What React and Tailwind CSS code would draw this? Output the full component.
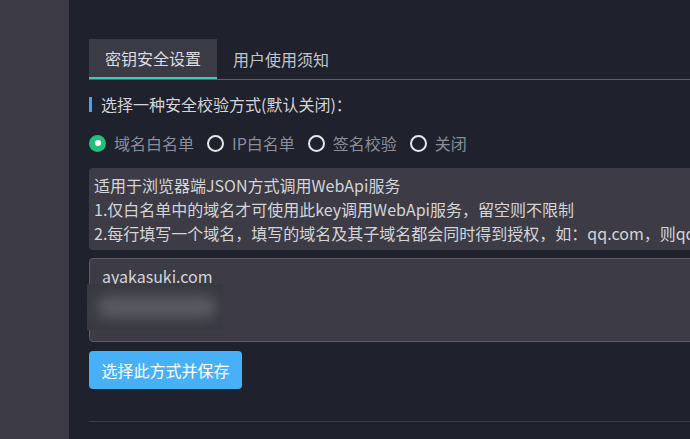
import React, { useState } from "react";

const options = ["域名白名单", "IP白名单", "签名校验", "关闭"];

const Radio = ({ label, checked, onClick }) => (
  <button
    type="button"
    onClick={onClick}
    className="flex items-center gap-[8px] mr-[13px] text-[16px] text-[#8b8e9a]"
  >
    {checked ? (
      <span className="w-[17px] h-[17px] rounded-full bg-[#22c17a] flex items-center justify-center">
        <span className="w-[6px] h-[6px] rounded-full bg-white" />
      </span>
    ) : (
      <span className="w-[17px] h-[17px] rounded-full border-[2.5px] border-[#e6e6ea]" />
    )}
    <span>{label}</span>
  </button>
);

const App = () => {
  const [tab, setTab] = useState(0);
  const [mode, setMode] = useState(0);

  return (
    <div
      className="flex w-[690px] h-[439px] overflow-hidden bg-[#1f212c]"
      style={{ fontFamily: '"Microsoft YaHei", "Noto Sans CJK SC", sans-serif' }}
    >
      <aside className="w-[69px] shrink-0 bg-[#3c3b45]" />
      <main className="flex-1 min-w-0 overflow-hidden pl-[20px] pt-[39px]">
        <div className="w-[700px]">
          <div className="flex border-b border-[#5e5f67]">
            {["密钥安全设置", "用户使用须知"].map((t, i) => (
              <button
                key={t}
                type="button"
                onClick={() => setTab(i)}
                className={
                  i === tab
                    ? "h-[40px] px-[16px] text-[16px] text-[#dcdce0] bg-[#3b3b45] border-b-2 border-[#3ec9b5] -mb-[1px]"
                    : "h-[40px] px-[16px] text-[16px] text-[#c2c3c8]"
                }
              >
                {t}
              </button>
            ))}
          </div>

          <div className="flex items-center mt-[16px] h-[16px]">
            <span className="w-[3px] h-[15px] bg-[#43a6f1]" />
            <span className="ml-[9px] text-[16px] text-[#d3d4d8] leading-none">
              选择一种安全校验方式(默认关闭)：
            </span>
          </div>

          <div className="flex items-center mt-[21px] h-[20px]">
            {options.map((o, i) => (
              <Radio key={o} label={o} checked={mode === i} onClick={() => setMode(i)} />
            ))}
          </div>

          <div className="mt-[15px] rounded-[4px] bg-[#3d3c46] px-[5px] py-[5px] text-[16px] leading-[24px] text-[#d3d4d8] whitespace-nowrap">
            <p>适用于浏览器端JSON方式调用WebApi服务</p>
            <p>1.仅白名单中的域名才可使用此key调用WebApi服务，留空则不限制</p>
            <p>2.每行填写一个域名，填写的域名及其子域名都会同时得到授权，如：qq.com，则qq.com及*.qq.com均可使用</p>
          </div>

          <div className="relative mt-[8px] h-[84px] rounded-[4px] border border-[#5a5b63] bg-[#3d3c46] px-[12px] pt-[6px] text-[16px] leading-[22px] text-[#d3d4d8]">
            <p>ayakasuki.com</p>
            <div className="absolute left-[-3px] top-[25px] w-[136px] h-[46px] bg-[#393942] overflow-hidden">
              <div className="ml-[10px] mt-[12px] w-[120px] h-[22px] rounded-full bg-[#5a5b63] blur-[7px]" />
            </div>
          </div>

          <button
            type="button"
            className="mt-[9px] w-[153px] h-[38px] rounded-[4px] bg-[#48b0f6] text-[16px] text-white"
          >
            选择此方式并保存
          </button>

          <div className="mt-[32px] border-t border-[#393c47]" />
        </div>
      </main>
    </div>
  );
};

export default App;
